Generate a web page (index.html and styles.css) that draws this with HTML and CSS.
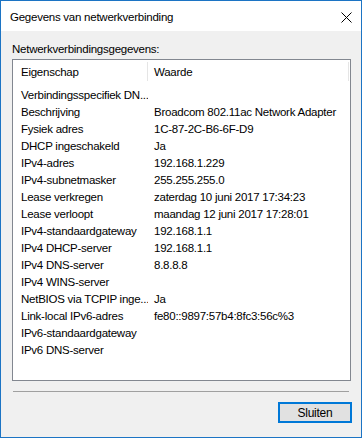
FILE: index.html
```html
<!DOCTYPE html>
<html lang="nl">
<head>
  <meta charset="UTF-8" />
  <title>Gegevens van netwerkverbinding</title>
  <link rel="stylesheet" href="styles.css">
</head>
<body>
  <div class="window">
    <div class="titlebar">
      <span class="title">Gegevens van netwerkverbinding</span>
      <svg class="close" width="11" height="11" viewBox="0 0 11 11">
        <path d="M0.5 0.5 L10.5 10.5 M10.5 0.5 L0.5 10.5" stroke="#000" stroke-width="1" fill="none"/>
      </svg>
    </div>

    <div class="content">
      <div class="label">Netwerkverbindingsgegevens:</div>

      <div class="listbox">
        <div class="list-header">
          <div class="hcell col-prop">Eigenschap</div>
          <div class="hcell col-val">Waarde</div>
        </div>
        <div class="rows">
          <div class="row"><span class="prop">Verbindingsspecifiek DN...</span><span class="val"></span></div>
          <div class="row"><span class="prop">Beschrijving</span><span class="val">Broadcom 802.11ac Network Adapter</span></div>
          <div class="row"><span class="prop">Fysiek adres</span><span class="val">1C-87-2C-B6-6F-D9</span></div>
          <div class="row"><span class="prop">DHCP ingeschakeld</span><span class="val">Ja</span></div>
          <div class="row"><span class="prop">IPv4-adres</span><span class="val">192.168.1.229</span></div>
          <div class="row"><span class="prop">IPv4-subnetmasker</span><span class="val">255.255.255.0</span></div>
          <div class="row"><span class="prop">Lease verkregen</span><span class="val">zaterdag 10 juni 2017 17:34:23</span></div>
          <div class="row"><span class="prop">Lease verloopt</span><span class="val">maandag 12 juni 2017 17:28:01</span></div>
          <div class="row"><span class="prop">IPv4-standaardgateway</span><span class="val">192.168.1.1</span></div>
          <div class="row"><span class="prop">IPv4 DHCP-server</span><span class="val">192.168.1.1</span></div>
          <div class="row"><span class="prop">IPv4 DNS-server</span><span class="val">8.8.8.8</span></div>
          <div class="row"><span class="prop">IPv4 WINS-server</span><span class="val"></span></div>
          <div class="row"><span class="prop">NetBIOS via TCPIP inge...</span><span class="val">Ja</span></div>
          <div class="row"><span class="prop">Link-local IPv6-adres</span><span class="val">fe80::9897:57b4:8fc3:56c%3</span></div>
          <div class="row"><span class="prop">IPv6-standaardgateway</span><span class="val"></span></div>
          <div class="row"><span class="prop">IPv6 DNS-server</span><span class="val"></span></div>
        </div>
      </div>

      <div class="separator"></div>

      <div class="buttons">
        <button class="btn">Sluiten</button>
      </div>
    </div>
  </div>
</body>
</html>
```

FILE: styles.css
```css
body {
  margin: 0;
  font-family: 'Liberation Sans', Arial, sans-serif;
  font-size: 11.5px;
  letter-spacing: -0.25px;
  color: #000;
}

.window {
  width: 362px;
  height: 438px;
  box-sizing: border-box;
  border: 1px solid #1c74c4;
  display: flex;
  flex-direction: column;
  background-color: #f0f0f0;
}

.titlebar {
  height: 30px;
  background-color: #fff;
  display: flex;
  align-items: center;
  justify-content: space-between;
  padding: 0 9px 0 9px;
}

.title {
  line-height: 16px;
  padding-top: 1px;
}

.close {
  display: block;
  margin-top: 2px;
}

.content {
  flex: 1;
  padding: 10px 10px 0 11px;
}

.label {
  line-height: 16px;
  margin-bottom: 2px;
}

.listbox {
  height: 322px;
  box-sizing: border-box;
  border: 1px solid #828790;
  background-color: #fff;
}

.list-header {
  display: flex;
  padding: 2px 0 3px;
}

.hcell {
  flex: none;
  height: 19px;
  box-sizing: border-box;
  padding-top: 2px;
  line-height: 16px;
  border-right: 1px solid #e5e5e5;
}

.col-prop {
  width: 135px;
  padding-left: 8px;
}

.col-val {
  width: 201px;
  padding-left: 6px;
}

.rows {
  margin-top: 3px;
}

.row {
  display: flex;
  height: 17px;
  line-height: 17px;
  white-space: nowrap;
}

.prop {
  flex: none;
  width: 135px;
  padding-left: 8px;
  box-sizing: border-box;
  overflow: hidden;
}

.val {
  padding-left: 6px;
}

.separator {
  height: 1px;
  background-color: #a0a0a0;
  margin: 10px 2px 0 1px;
}

.buttons {
  display: flex;
  justify-content: flex-end;
  margin-top: 10px;
  margin-right: -1px;
}

.btn {
  width: 74px;
  height: 21px;
  box-sizing: border-box;
  border: 2px solid #0078d7;
  background-color: #e1e1e1;
  font-family: inherit;
  font-size: 12px;
  letter-spacing: -0.25px;
  padding: 0;
  color: #000;
}
```
